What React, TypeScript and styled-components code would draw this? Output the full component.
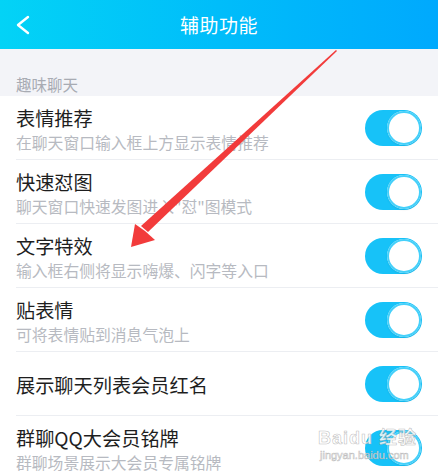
import React from "react";
import styled, { createGlobalStyle } from "styled-components";

const GlobalStyle = createGlobalStyle`
  html, body {
    margin: 0;
    padding: 0;
    background: #ffffff;
  }
  body {
    font-family: "Noto Sans CJK SC", "Noto Sans", sans-serif;
  }
`;

const Screen = styled.div`
  position: relative;
  width: 438px;
  height: 475px;
  overflow: hidden;
  background: #ffffff;
`;

const Header = styled.header`
  height: 49px;
  display: grid;
  grid-template-columns: 60px 1fr 60px;
  align-items: center;
  background: linear-gradient(90deg, #03d3f6 0%, #00bdfa 50%, #00a9fd 100%);
  color: #ffffff;
`;

const BackButton = styled.div`
  display: flex;
  align-items: center;
  padding-left: 16px;
  height: 100%;
`;

const Title = styled.h1`
  margin: 0;
  text-align: center;
  font-size: 19px;
  font-weight: 400;
  line-height: 24px;
  letter-spacing: 0.5px;
`;

const SectionLabel = styled.div`
  height: 47px;
  background: #f3f4f8;
  color: #a8abb3;
  font-size: 15.5px;
  line-height: 20px;
  display: flex;
  align-items: flex-end;
  padding: 0 16px 2px;
  box-sizing: border-box;
`;

const List = styled.div`
  display: flex;
  flex-direction: column;
`;

const Row = styled.div`
  height: 64px;
  margin-left: 16px;
  padding-right: 16px;
  display: flex;
  align-items: center;
  justify-content: space-between;
  border-bottom: 1px solid #eceef2;
  box-sizing: border-box;
`;

const Texts = styled.div`
  display: flex;
  flex-direction: column;
  justify-content: center;
  gap: 3px;
  padding-top: 3px;
`;

const ItemTitle = styled.div`
  font-size: 19.2px;
  line-height: 24px;
  color: #1e1e1e;
`;

const ItemDesc = styled.div`
  font-size: 15.8px;
  line-height: 20px;
  color: #b7bac1;
`;

const Track = styled.div<{ $on: boolean }>`
  position: relative;
  width: 57px;
  height: 36px;
  border-radius: 18px;
  background: ${(p) => (p.$on ? "#17c2f8" : "#e5e6ea")};
  flex-shrink: 0;
`;

const Knob = styled.div<{ $on: boolean }>`
  position: absolute;
  top: 1px;
  ${(p) => (p.$on ? "right: 1px;" : "left: 1px;")}
  width: 34px;
  height: 34px;
  border-radius: 50%;
  background: #ffffff;
  box-shadow: inset 0 0 0 2px #45d0fa, 0 1px 2px rgba(0, 0, 0, 0.08);
`;

const ArrowLayer = styled.svg`
  position: absolute;
  left: 0;
  top: 0;
  pointer-events: none;
`;

const Watermark = styled.div`
  position: absolute;
  left: 318px;
  top: 428px;
  display: flex;
  flex-direction: column;
  align-items: flex-start;
  color: rgba(255, 255, 255, 0.85);
  -webkit-text-stroke: 0.6px rgba(150, 150, 150, 0.6);
  font-family: "Liberation Sans", "Noto Sans CJK SC", sans-serif;
  pointer-events: none;
`;

const MarkMain = styled.span`
  font-size: 18px;
  font-weight: 700;
  line-height: 20px;
  letter-spacing: 1px;
`;

const MarkSub = styled.span`
  font-size: 11px;
  line-height: 14px;
  padding-left: 2px;
`;

const Toggle = ({ on }: { on: boolean }) => (
  <Track $on={on}>
    <Knob $on={on} />
  </Track>
);

interface Item {
  title: string;
  desc?: string;
  on: boolean;
}

const items: Item[] = [
  { title: "表情推荐", desc: "在聊天窗口输入框上方显示表情推荐", on: true },
  { title: "快速怼图", desc: "聊天窗口快速发图进入\"怼\"图模式", on: true },
  { title: "文字特效", desc: "输入框右侧将显示嗨爆、闪字等入口", on: true },
  { title: "贴表情", desc: "可将表情贴到消息气泡上", on: true },
  { title: "展示聊天列表会员红名", on: true },
  { title: "群聊QQ大会员铭牌", desc: "群聊场景展示大会员专属铭牌", on: true },
];

export default function App() {
  return (
    <>
      <GlobalStyle />
      <Screen>
        <Header>
          <BackButton>
            <svg width="14" height="20" viewBox="0 0 14 20">
              <polyline
                points="12,2 2,10 12,18"
                fill="none"
                stroke="#ffffff"
                strokeWidth="2.4"
                strokeLinecap="round"
                strokeLinejoin="round"
              />
            </svg>
          </BackButton>
          <Title>辅助功能</Title>
          <div />
        </Header>
        <SectionLabel>趣味聊天</SectionLabel>
        <List>
          {items.map((item) => (
            <Row key={item.title}>
              <Texts>
                <ItemTitle>{item.title}</ItemTitle>
                {item.desc && <ItemDesc>{item.desc}</ItemDesc>}
              </Texts>
              <Toggle on={item.on} />
            </Row>
          ))}
        </List>

        {/* red annotation arrow drawn over the list */}
        <ArrowLayer width="438" height="475" viewBox="0 0 438 475">
          <polygon
            points="336,50 337,51 148,232 141,226"
            fill="#f23b3b"
          />
          <polygon
            points="131,247 135,224 145,231 155,240"
            fill="#f23b3b"
          />
        </ArrowLayer>

        <Watermark>
          <MarkMain>Baidu 经验</MarkMain>
          <MarkSub>jingyan.baidu.com</MarkSub>
        </Watermark>
      </Screen>
    </>
  );
}
